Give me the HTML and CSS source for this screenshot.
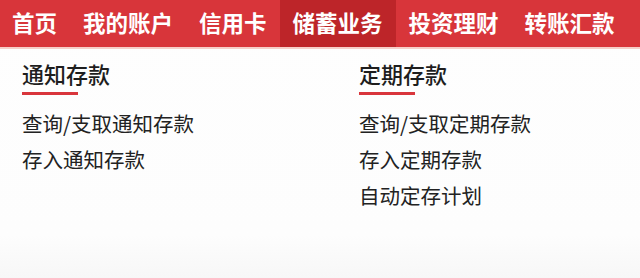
FILE: index.html
```html
<!DOCTYPE html>
<html lang="zh">
<head>
<meta charset="utf-8">
<link rel="stylesheet" href="styles.css">
</head>
<body>
<nav class="nav">
  <a class="nav-item">首页</a>
  <a class="nav-item">我的账户</a>
  <a class="nav-item">信用卡</a>
  <a class="nav-item active">储蓄业务</a>
  <a class="nav-item">投资理财</a>
  <a class="nav-item">转账汇款</a>
</nav>
<div class="menu">
  <div class="col col-left">
    <h3 class="title">通知存款</h3>
    <ul class="list">
      <li>查询/支取通知存款</li>
      <li>存入通知存款</li>
    </ul>
  </div>
  <div class="col col-right">
    <h3 class="title">定期存款</h3>
    <ul class="list">
      <li>查询/支取定期存款</li>
      <li>存入定期存款</li>
      <li>自动定存计划</li>
    </ul>
  </div>
</div>
</body>
</html>
```
FILE: styles.css
```css
* { box-sizing: border-box; }
html, body { margin: 0; padding: 0; }
body {
  width: 640px;
  height: 278px;
  overflow: hidden;
  background: linear-gradient(#fefefe 0, #fdfdfd 235px, #f7f7f7 278px);
  font-family: "Noto Sans CJK SC", "Noto Sans", sans-serif;
}
.nav {
  display: flex;
  height: 49px;
  background: #d8353a;
  border-bottom: 2px solid #f6cfc9;
}
.nav-item {
  display: flex;
  align-items: center;
  padding: 0 13px 2px;
  font-size: 22.5px;
  font-weight: 700;
  color: #fff;
  white-space: nowrap;
  line-height: 1;
}
.nav-item:first-child { padding-left: 12px; }
.nav-item.active { background: #bd2529; }
.menu {
  display: flex;
  padding-top: 11px;
}
.col-left { margin-left: 22px; width: 337px; }
.title {
  margin: 0;
  font-size: 22px;
  font-weight: 500;
  color: #1e1e1e;
  line-height: 26px;
  padding-bottom: 7px;
}
.title::after {
  content: "";
  display: block;
  width: 56px;
  height: 3px;
  background: #d9363c;
  margin-top: 6px;
}
.list {
  list-style: none;
  margin: 0;
  padding: 0;
  margin-top: 3px;
}
.list li {
  font-size: 20.5px;
  color: #222;
  line-height: 36px;
  white-space: nowrap;
}
```
